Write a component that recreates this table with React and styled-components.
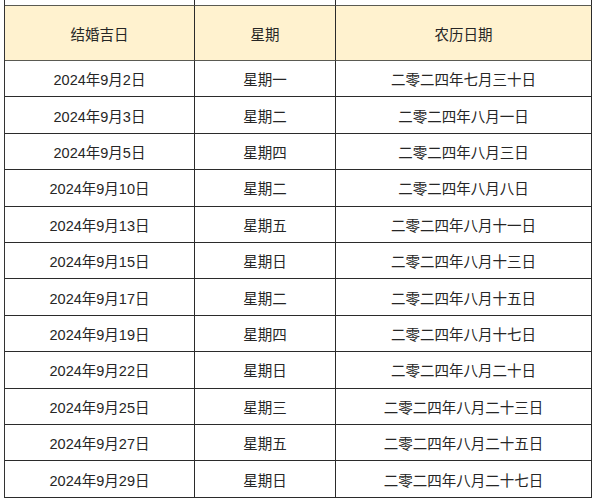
import React from 'react';
import styled, { createGlobalStyle } from 'styled-components';

const GlobalStyle = createGlobalStyle`
  html, body {
    margin: 0;
    padding: 0;
    background: #ffffff;
  }
  body {
    font-family: "Liberation Sans Narrow", "Liberation Sans", "Noto Sans CJK SC", sans-serif;
    color: #262626;
  }
`;

const Page = styled.div`
  width: 595px;
  height: 500px;
  overflow: hidden;
  padding-left: 4px;
  box-sizing: border-box;
`;

const Sheet = styled.div`
  display: grid;
  grid-template-columns: 190px 141px 256px;
  border-left: 1px solid #333;
`;

const Cell = styled.div`
  box-sizing: border-box;
  border-right: 1px solid #2b2b2b;
  border-bottom: 1px solid #2b2b2b;
  height: ${props => props.$h}px;
  display: flex;
  align-items: center;
  justify-content: center;
  font-size: 14.5px;
  white-space: nowrap;
  background: ${props => (props.$head ? '#fff2cf' : '#ffffff')};
  border-bottom-color: ${props => (props.$head ? '#5a5a52' : '#2b2b2b')};
`;

const StubCell = styled(Cell)`
  border-bottom-color: #5a5a52;
`;

const headers = ['结婚吉日', '星期', '农历日期'];

const rows = [
  ['2024年9月2日', '星期一', '二零二四年七月三十日'],
  ['2024年9月3日', '星期二', '二零二四年八月一日'],
  ['2024年9月5日', '星期四', '二零二四年八月三日'],
  ['2024年9月10日', '星期二', '二零二四年八月八日'],
  ['2024年9月13日', '星期五', '二零二四年八月十一日'],
  ['2024年9月15日', '星期日', '二零二四年八月十三日'],
  ['2024年9月17日', '星期二', '二零二四年八月十五日'],
  ['2024年9月19日', '星期四', '二零二四年八月十七日'],
  ['2024年9月22日', '星期日', '二零二四年八月二十日'],
  ['2024年9月25日', '星期三', '二零二四年八月二十三日'],
  ['2024年9月27日', '星期五', '二零二四年八月二十五日'],
  ['2024年9月29日', '星期日', '二零二四年八月二十七日'],
];

export default function App() {
  return (
    <Page>
      <GlobalStyle />
      <Sheet>
        {headers.map(h => (
          <StubCell key={'stub-' + h} $h={6} />
        ))}
        {headers.map(h => (
          <Cell key={h} $head $h={55}>
            {h}
          </Cell>
        ))}
        {rows.map(row =>
          row.map((text, i) => (
            <Cell key={row[0] + i} $h={36.42}>
              {text}
            </Cell>
          ))
        )}
      </Sheet>
    </Page>
  );
}
